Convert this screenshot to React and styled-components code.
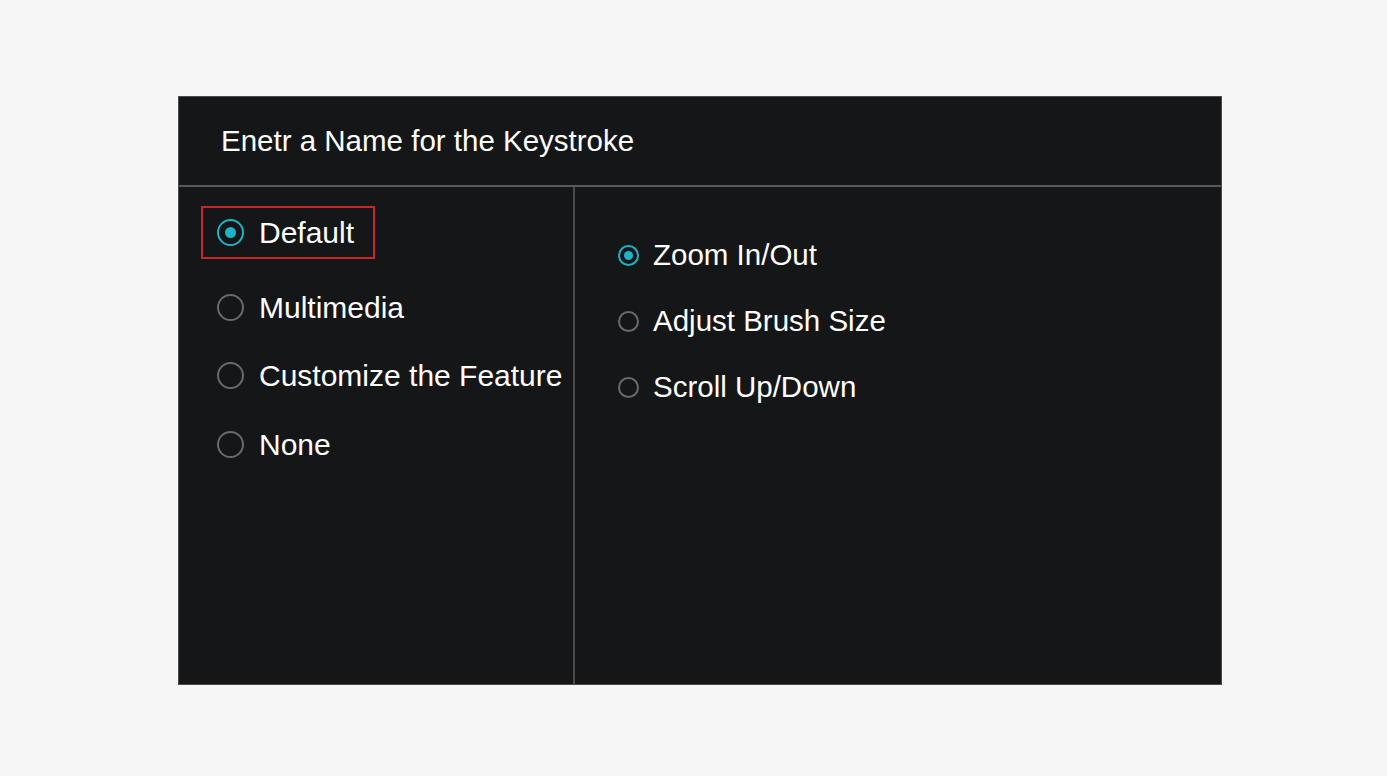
import React from 'react';
import styled, { createGlobalStyle } from 'styled-components';

const GlobalStyle = createGlobalStyle`
    html, body {
        margin: 0;
        padding: 0;
        background: #f6f6f6;
        font-family: "Liberation Sans", Arial, sans-serif;
    }
`

const Page = styled.div`
    width: 1387px;
    height: 776px;
    padding-top: 96px;
    padding-left: 178px;
    box-sizing: border-box;
`

const Panel = styled.div`
    width: 1044px;
    height: 589px;
    background: #151618;
    border: 1px solid #4b4b4b;
    box-sizing: border-box;
    display: flex;
    flex-direction: column;
`

const Header = styled.div`
    height: 90px;
    display: flex;
    align-items: center;
    padding-left: 42px;
    padding-bottom: 1px;
    box-sizing: border-box;
    border-bottom: 2px solid #5a5a5a;
    color: #ffffff;
    font-size: 29.5px;
`

const Body = styled.div`
    flex: 1;
    display: flex;
`

const LeftColumn = styled.div`
    width: 396px;
    border-right: 2px solid #4a4a4a;
    padding: 19px 0 0 22px;
    box-sizing: border-box;
    display: flex;
    flex-direction: column;
    gap: 15px;
`

const RightColumn = styled.div`
    flex: 1;
    padding: 55px 0 0 41px;
    box-sizing: border-box;
    display: flex;
    flex-direction: column;
    gap: 40px;
`

const Option = styled.div`
    display: flex;
    align-items: center;
    box-sizing: border-box;
    height: ${p => (p.$small ? '26px' : '53px')};
    width: ${p => (p.$boxed ? '174px' : 'auto')};
    padding-left: ${p => (p.$small ? '0' : '14px')};
    border: 2px solid ${p => (p.$boxed ? '#c8262b' : 'transparent')};
    margin-bottom: ${p => (p.$boxed ? '7px' : '0')};
    margin-top: ${p => (p.$last ? '1px' : '0')};
    color: #ffffff;
    font-size: ${p => (p.$small ? '29.5px' : '30px')};
    white-space: nowrap;
`

const Radio = styled.span`
    flex: none;
    width: ${p => p.$size}px;
    height: ${p => p.$size}px;
    border-radius: 50%;
    border: 2px solid ${p => (p.$checked ? '#1db3c6' : '#6a6a6a')};
    box-sizing: border-box;
    display: flex;
    align-items: center;
    justify-content: center;
    margin-right: ${p => (p.$size > 24 ? 15 : 14)}px;

    &::after {
        content: '';
        display: ${p => (p.$checked ? 'block' : 'none')};
        width: ${p => Math.round(p.$size * 0.42)}px;
        height: ${p => Math.round(p.$size * 0.42)}px;
        border-radius: 50%;
        background: #1db3c6;
    }
`

const leftOptions = ['Default', 'Multimedia', 'Customize the Feature', 'None'];
const rightOptions = ['Zoom In/Out', 'Adjust Brush Size', 'Scroll Up/Down'];

const App = () => {
    return (
        <Page>
            <GlobalStyle />
            <Panel>
                <Header>Enetr a Name for the Keystroke</Header>
                <Body>
                    <LeftColumn>
                        {leftOptions.map((label, i) => (
                            <Option key={label} $boxed={i === 0} $last={i === leftOptions.length - 1}>
                                <Radio $size={27} $checked={i === 0} />
                                {label}
                            </Option>
                        ))}
                    </LeftColumn>
                    <RightColumn>
                        {rightOptions.map((label, i) => (
                            <Option key={label} $small>
                                <Radio $size={21} $checked={i === 0} />
                                {label}
                            </Option>
                        ))}
                    </RightColumn>
                </Body>
            </Panel>
        </Page>
    )
}

export default App;
